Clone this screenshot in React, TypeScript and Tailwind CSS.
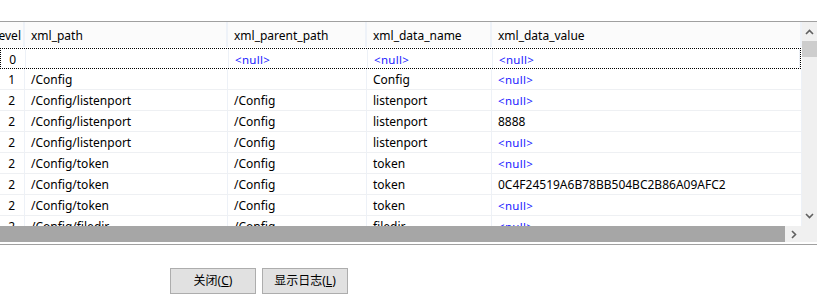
import React from 'react';

type Row = {
  level: string;
  path: string;
  parent: string | null;
  name: string | null;
  value: string | null;
};

const rows: Row[] = [
  { level: '0', path: '', parent: null, name: null, value: null },
  { level: '1', path: '/Config', parent: '', name: 'Config', value: null },
  { level: '2', path: '/Config/listenport', parent: '/Config', name: 'listenport', value: null },
  { level: '2', path: '/Config/listenport', parent: '/Config', name: 'listenport', value: '8888' },
  { level: '2', path: '/Config/listenport', parent: '/Config', name: 'listenport', value: null },
  { level: '2', path: '/Config/token', parent: '/Config', name: 'token', value: null },
  { level: '2', path: '/Config/token', parent: '/Config', name: 'token', value: '0C4F24519A6B78BB504BC2B86A09AFC2' },
  { level: '2', path: '/Config/token', parent: '/Config', name: 'token', value: null },
  { level: '2', path: '/Config/filedir', parent: '/Config', name: 'filedir', value: null },
];

// column widths (left edge scrolled off)
const cols = ['w-[25px]', 'w-[203px]', 'w-[139px]', 'w-[125px]', 'flex-1'];

const Cell: React.FC<{ v: string | null; className: string }> = ({ v, className }) => (
  <div className={`${className} h-full flex items-center pt-[2px] pl-[6px] border-r border-[#edf1f7] overflow-hidden whitespace-nowrap`}>
    {v === null ? <span className="text-[11.5px] text-[#2020ff] tracking-[0.3px]">&lt;null&gt;</span> : v}
  </div>
);

const App: React.FC = () => {
  return (
    <div
      className="w-[817px] h-[296px] bg-white text-[12px] text-black overflow-hidden"
      style={{ fontFamily: '"Noto Sans", "Noto Sans CJK SC", sans-serif' }}
    >
      <div className="h-[22px] border-b border-[#a0a0a0]" />
      {/* grid */}
      <div className="flex h-[204px]">
        <div className="flex-1 overflow-hidden">
          {/* header */}
          <div className="flex h-[25px] bg-[#fbfbfb]">
            <div className="w-[25px] h-full flex items-center justify-end pt-[2px] pr-[2px] border-r-2 border-[#eef2f8] overflow-hidden">evel</div>
            {['xml_path', 'xml_parent_path', 'xml_data_name', 'xml_data_value'].map((h, i) => (
              <div key={h} className={`${cols[i + 1]} h-full flex items-center pt-[2px] pl-[6px] border-r-2 border-[#eef2f8]`}>{h}</div>
            ))}
          </div>
          {rows.map((r, i) => (
            <div
              key={i}
              className={`flex h-[21px] ${i === 0 ? 'border border-dotted border-black mr-px mt-px' : 'border-b border-[#eef0f3]'}`}
            >
              <div className="w-[25px] h-full flex items-center justify-end pt-[2px] pr-[9px] border-r border-[#edf1f7]">{r.level}</div>
              <Cell v={r.path} className={cols[1]} />
              <Cell v={r.parent} className={cols[2]} />
              <Cell v={r.name} className={cols[3]} />
              <Cell v={r.value} className={cols[4]} />
            </div>
          ))}
        </div>
        {/* vertical scrollbar */}
        <div className="w-[15px] bg-[#f0f0f0] flex flex-col items-center">
          <svg width="9" height="6" viewBox="0 0 9 6" className="mt-[7px]">
            <path d="M1 5 L4.5 1.5 L8 5" stroke="#606060" strokeWidth="1.6" fill="none" />
          </svg>
          <div className="w-full h-[16px] bg-[#cdcdcd] mt-[6px]" />
          <div className="flex-1" />
          <svg width="9" height="6" viewBox="0 0 9 6" className="mb-[7px]">
            <path d="M1 1 L4.5 4.5 L8 1" stroke="#606060" strokeWidth="1.6" fill="none" />
          </svg>
        </div>
      </div>
      {/* horizontal scrollbar */}
      <div className="flex h-[16px] bg-[#f0f0f0]">
        <div className="w-[785px] h-full bg-[#a6a6a6]" />
        <div className="w-[17px] flex items-center justify-center">
          <svg width="6" height="9" viewBox="0 0 6 9">
            <path d="M1 1 L4.5 4.5 L1 8" stroke="#606060" strokeWidth="1.6" fill="none" />
          </svg>
        </div>
      </div>
      <div className="h-[2px]" />
      <div className="h-px bg-[#a0a0a0]" />
      {/* buttons */}
      <div className="flex gap-[6px] pl-[170px] pt-[23px] text-[12px]">
        <button className="w-[86px] h-[26px] bg-[#e1e1e1] border border-[#adadad] flex items-center justify-center">
          关闭(<span className="underline">C</span>)
        </button>
        <button className="w-[86px] h-[26px] bg-[#e1e1e1] border border-[#adadad] flex items-center justify-center">
          显示日志(<span className="underline">L</span>)
        </button>
      </div>
    </div>
  );
};

export default App;
